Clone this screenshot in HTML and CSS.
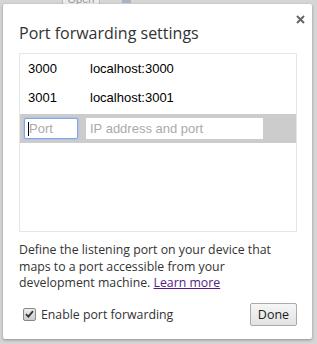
FILE: index.html
```html
<!DOCTYPE html>
<html>
<head>
<meta charset="utf-8">
<link rel="stylesheet" href="styles.css">
</head>
<body>
<div class="backdrop">
  <div class="topbar">
    <span class="open-btn">Open</span>
    <span class="tb-icon"></span>
  </div>
  <div class="dialog">
    <div class="close">
      <svg width="9" height="9" viewBox="0 0 9 9"><path d="M1 1L8 8M8 1L1 8" stroke="#666" stroke-width="2"/></svg>
    </div>
    <h1 class="title">Port forwarding settings</h1>
    <div class="list">
      <div class="row"><span class="port">3000</span><span class="addr">localhost:3000</span></div>
      <div class="row"><span class="port">3001</span><span class="addr">localhost:3001</span></div>
      <div class="row edit">
        <div class="in port-in"><span class="caret"></span>Port</div>
        <div class="in addr-in">IP address and port</div>
      </div>
    </div>
    <p class="desc">Define the listening port on your device that maps to a port accessible from your development machine. <a href="#" class="link">Learn more</a></p>
    <div class="footer">
      <label class="check"><span class="box"><svg width="9" height="8" viewBox="0 0 9 8"><path d="M1 4.2L3.4 6.6L8 1.2" fill="none" stroke="#333" stroke-width="1.8"/></svg></span>Enable port forwarding</label>
      <button class="done">Done</button>
    </div>
  </div>
</div>
</body>
</html>
```
FILE: styles.css
```css
html, body { margin: 0; padding: 0; }
body { width: 317px; height: 344px; overflow: hidden; background: #dcdcdc; font-family: "Open Sans", sans-serif; }
.backdrop { position: relative; width: 317px; height: 344px; background: #d6d6d6; }
.topbar { position: absolute; left: 0; top: 0; width: 317px; height: 4px; }
.open-btn { position: absolute; left: 62px; top: -9px; width: 36px; height: 12px; border: 1px solid #bbb; border-radius: 2px; background: #ececec; font: 11px "Liberation Sans", sans-serif; color: #999; text-align: center; line-height: 14px; overflow: hidden; }
.tb-icon { position: absolute; left: 122px; top: 0; width: 9px; height: 3px; background: #a9b3c3; }
.dialog { position: absolute; left: 3px; top: 4px; width: 309px; height: 335px; background: #fff; border-radius: 2px; box-shadow: 0 1px 3px rgba(0,0,0,0.35); box-sizing: border-box; padding: 17px 15px 0 16px; }
.close { position: absolute; right: 7px; top: 11px; width: 9px; height: 9px; line-height: 0; }
.title { margin: 0; font-weight: normal; font-size: 16px; color: #333; line-height: 24px; height: 32px; }
.list { height: 179px; border: 1px solid #e6e6e6; box-sizing: border-box; }
.row { display: flex; align-items: center; height: 29px; font: 13px "Liberation Sans", sans-serif; color: #000; }
.port { width: 62px; padding-left: 8px; }
.edit { background: #cccccc; height: 29px; margin-top: 2px; padding-left: 4px; gap: 8px; }
.in { height: 21px; box-sizing: border-box; background: #fff; font: 13px "Liberation Sans", sans-serif; color: #aaa; display: flex; align-items: center; padding-left: 4px; }
.port-in { width: 54px; border: 1px solid #7ea6ee; box-shadow: 0 0 2px #8ab0f0; border-radius: 2px; padding-left: 3px; }
.caret { display: inline-block; width: 1px; height: 14px; background: #000; }
.addr-in { width: 177px; }
.desc { margin: 10px 0 0 0; font-size: 12.3px; line-height: 16.5px; color: #333; }
.link { color: #551a8b; }
.footer { display: flex; justify-content: space-between; align-items: center; margin-top: 11px; }
.check { display: flex; align-items: center; font-size: 12.3px; color: #333; padding-left: 4px; }
.box { width: 11px; height: 11px; border: 1px solid #888; border-radius: 2px; background: linear-gradient(#eee, #ccc); margin-right: 5px; display: flex; align-items: center; justify-content: center; }
.done { font-family: "Open Sans", sans-serif; font-size: 12.5px; color: #222; height: 23px; width: 47px; padding: 0; border: 1px solid #aaa; border-radius: 2px; background: linear-gradient(#f6f6f6, #e2e2e2); }
```
